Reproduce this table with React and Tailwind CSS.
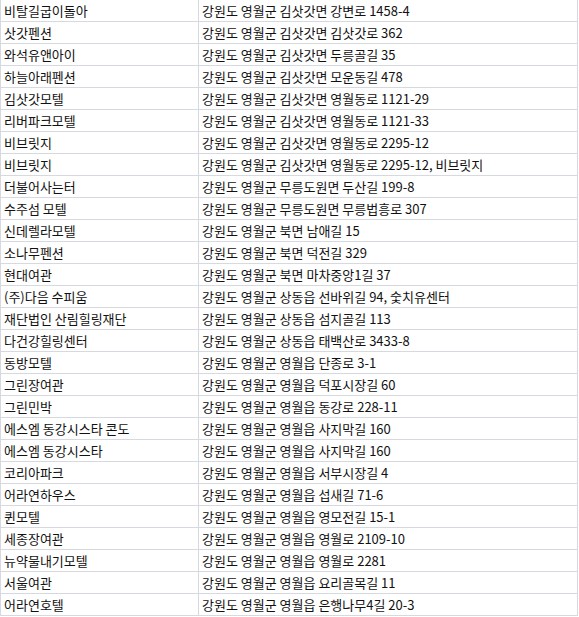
import React from "react";

const rows = [
  ["비탈길굽이돌아", "강원도 영월군 김삿갓면 강변로 1458-4"],
  ["삿갓펜션", "강원도 영월군 김삿갓면 김삿갓로 362"],
  ["와석유앤아이", "강원도 영월군 김삿갓면 두릉골길 35"],
  ["하늘아래펜션", "강원도 영월군 김삿갓면 모운동길 478"],
  ["김삿갓모텔", "강원도 영월군 김삿갓면 영월동로 1121-29"],
  ["리버파크모텔", "강원도 영월군 김삿갓면 영월동로 1121-33"],
  ["비브릿지", "강원도 영월군 김삿갓면 영월동로 2295-12"],
  ["비브릿지", "강원도 영월군 김삿갓면 영월동로 2295-12, 비브릿지"],
  ["더불어사는터", "강원도 영월군 무릉도원면 두산길 199-8"],
  ["수주섬 모텔", "강원도 영월군 무릉도원면 무릉법흥로 307"],
  ["신데렐라모텔", "강원도 영월군 북면 남애길 15"],
  ["소나무펜션", "강원도 영월군 북면 덕전길 329"],
  ["현대여관", "강원도 영월군 북면 마차중앙1길 37"],
  ["(주)다음 수피움", "강원도 영월군 상동읍 선바위길 94, 숯치유센터"],
  ["재단법인 산림힐링재단", "강원도 영월군 상동읍 섬지골길 113"],
  ["다건강힐링센터", "강원도 영월군 상동읍 태백산로 3433-8"],
  ["동방모텔", "강원도 영월군 영월읍 단종로 3-1"],
  ["그린장여관", "강원도 영월군 영월읍 덕포시장길 60"],
  ["그린민박", "강원도 영월군 영월읍 동강로 228-11"],
  ["에스엠 동강시스타 콘도", "강원도 영월군 영월읍 사지막길 160"],
  ["에스엠 동강시스타", "강원도 영월군 영월읍 사지막길 160"],
  ["코리아파크", "강원도 영월군 영월읍 서부시장길 4"],
  ["어라연하우스", "강원도 영월군 영월읍 섭새길 71-6"],
  ["퀸모텔", "강원도 영월군 영월읍 영모전길 15-1"],
  ["세종장여관", "강원도 영월군 영월읍 영월로 2109-10"],
  ["뉴약물내기모텔", "강원도 영월군 영월읍 영월로 2281"],
  ["서울여관", "강원도 영월군 영월읍 요리골목길 11"],
  ["어라연호텔", "강원도 영월군 영월읍 은행나무4길 20-3"],
];

export default function App() {
  return (
    <div
      className="w-[579px] h-[617px] bg-white overflow-hidden text-[13px] text-[#111]"
      style={{ fontFamily: '"Noto Sans CJK KR", "Noto Sans", sans-serif' }}
    >
      <div className="w-[578px] border-l border-[#d6d9e0]">
        {rows.map(([name, addr], i) => (
          <div key={i} className="flex h-[22px] border-b border-[#d6d9e0]">
            <div className="w-[198px] shrink-0 border-r border-[#d6d9e0] pl-[3px] leading-[21px] whitespace-nowrap overflow-hidden">
              {name}
            </div>
            <div className="flex-1 border-r border-[#d6d9e0] pl-[3px] leading-[21px] whitespace-nowrap overflow-hidden">
              {addr}
            </div>
          </div>
        ))}
      </div>
    </div>
  );
}
